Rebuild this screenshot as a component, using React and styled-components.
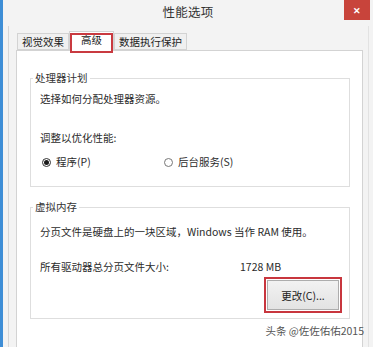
import React from "react";
import styled, { createGlobalStyle } from "styled-components";

const GlobalStyle = createGlobalStyle`
  body {
    margin: 0;
    font-family: "Noto Sans CJK SC", "Liberation Sans", sans-serif;
    color: #2b2b2b;
  }
`;

function App() {
  return (
    <>
      <GlobalStyle />
      <Window>
        <BlueEdge />
        <Frame>
          <TitleBar>
            <span />
            <Title>性能选项</Title>
            <CloseButton>✕</CloseButton>
          </TitleBar>
          <Body>
            <Content>
              <TabRow>
                <Tab>视觉效果</Tab>
                <Tab $active>高级</Tab>
                <Tab>数据执行保护</Tab>
              </TabRow>
              <Panel>
                <Group $top={20}>
                  <Legend>处理器计划</Legend>
                  <Row $top={7}>选择如何分配处理器资源。</Row>
                  <Row $top={25}>调整以优化性能:</Row>
                  <Row $top={10}>
                    <RadioOption $width={122}>
                      <Radio $checked />
                      程序(P)
                    </RadioOption>
                    <RadioOption>
                      <Radio />
                      后台服务(S)
                    </RadioOption>
                  </Row>
                  <Spacer $h={17} />
                </Group>
                <Group $top={13}>
                  <Legend>虚拟内存</Legend>
                  <Row $top={11}>分页文件是硬盘上的一块区域，Windows 当作 RAM 使用。</Row>
                  <Row $top={21}>
                    <Label>所有驱动器总分页文件大小:</Label>
                    <span>1728 MB</span>
                  </Row>
                  <ButtonRow>
                    <Highlight>
                      <Button>更改(C)...</Button>
                    </Highlight>
                  </ButtonRow>
                  <Spacer $h={5} />
                </Group>
                <Watermark>头条 @佐佐佑佑2015</Watermark>
              </Panel>
            </Content>
          </Body>
        </Frame>
      </Window>
    </>
  );
}

export default App;

const Window = styled.div`
  width: 373px;
  height: 347px;
  display: flex;
  background: #f3f3f3;
  overflow: hidden;
`;

const BlueEdge = styled.div`
  width: 3px;
  background: #3e8ed6;
`;

const Frame = styled.div`
  flex: 1;
  display: flex;
  flex-direction: column;
`;

const TitleBar = styled.div`
  height: 26px;
  display: grid;
  grid-template-columns: 1fr auto 1fr;
  align-items: start;
`;

const Title = styled.div`
  font-size: 12.5px;
  line-height: 24px;
  color: #333;
  letter-spacing: 0.3px;
`;

const CloseButton = styled.div`
  justify-self: end;
  margin-right: 3px;
  width: 26px;
  height: 20px;
  background: #c8443b;
  color: #fff;
  font-size: 9px;
  font-weight: bold;
  display: flex;
  align-items: center;
  justify-content: center;
`;

const Body = styled.div`
  flex: 1;
  display: flex;
  margin-left: 5px;
  border-left: 1px solid #d6d6d6;
  padding-left: 7px;
  min-height: 0;
`;

const Content = styled.div`
  flex: 1;
  display: flex;
  flex-direction: column;
  margin-right: 4px;
  border-right: 0;
  padding-right: 6px;
  padding-top: 5px;
  min-height: 0;
  box-shadow: inset -1px 0 0 #e2e2e2;
`;

const TabRow = styled.div`
  display: flex;
  align-items: flex-end;
  padding-left: 1px;
  height: 19px;
  position: relative;
  z-index: 1;
`;

const Tab = styled.div`
  position: relative;
  height: ${({ $active }) => ($active ? "20px" : "17px")};
  margin-bottom: ${({ $active }) => ($active ? "-1px" : "0")};
  padding: 0 ${({ $active }) => ($active ? "11px" : "4px")};
  box-sizing: border-box;
  border: 1px solid #d3d3d3;
  border-bottom: ${({ $active }) => ($active ? "0" : "1px solid #d3d3d3")};
  background: ${({ $active }) => ($active ? "#fff" : "#f0f0f0")};
  font-size: 10.5px;
  line-height: 15px;
  color: #222;
  white-space: nowrap;

  &::after {
    content: "";
    display: ${({ $active }) => ($active ? "block" : "none")};
    position: absolute;
    left: 0;
    top: 1px;
    right: 0;
    bottom: -2px;
    border: 2px solid #c93a40;
  }
`;

const Panel = styled.div`
  position: relative;
  flex: 1;
  background: #fff;
  border: 1px solid #d3d3d3;
  border-bottom: 0;
  padding: 0 12px 0 13px;
`;

const Group = styled.fieldset`
  margin: ${({ $top }) => $top}px 0 0;
  padding: 0 7px 0 9px;
  border: 1px solid #dedede;
  min-width: 0;
`;

const Legend = styled.legend`
  padding: 0 2px;
  margin-left: -7px;
  font-size: 10.5px;
  line-height: 14px;
  color: #333;
`;

const Row = styled.div`
  display: flex;
  align-items: center;
  height: 14px;
  margin-top: ${({ $top }) => $top}px;
  font-size: 10.5px;
  line-height: 14px;
  color: #2b2b2b;
  white-space: nowrap;
`;

const Label = styled.span`
  width: 200px;
`;

const RadioOption = styled.span`
  display: flex;
  align-items: center;
  width: ${({ $width }) => ($width ? `${$width}px` : "auto")};
`;

const Radio = styled.span`
  width: 9px;
  height: 9px;
  margin: 0 5px 0 2px;
  box-sizing: border-box;
  border: 1px solid ${({ $checked }) => ($checked ? "#333" : "#777")};
  border-radius: 50%;
  display: flex;
  align-items: center;
  justify-content: center;

  &::before {
    content: "";
    width: 5px;
    height: 5px;
    border-radius: 50%;
    background: #1a1a1a;
    display: ${({ $checked }) => ($checked ? "block" : "none")};
  }
`;

const ButtonRow = styled.div`
  display: flex;
  justify-content: flex-end;
  margin-top: 3px;
`;

const Highlight = styled.div`
  border: 2px solid #c8363e;
  padding: 1px;
  display: flex;
`;

const Button = styled.div`
  width: 72px;
  height: 30px;
  box-sizing: border-box;
  border: 1px solid #adadad;
  background: linear-gradient(#f2f2f2, #e3e3e3);
  font-size: 10.5px;
  display: flex;
  align-items: center;
  justify-content: center;
  color: #222;
`;

const Spacer = styled.div`
  height: ${({ $h }) => $h}px;
`;

const Watermark = styled.div`
  position: absolute;
  right: -2px;
  top: 272px;
  font-size: 10.5px;
  color: #555;
  white-space: nowrap;
`;
